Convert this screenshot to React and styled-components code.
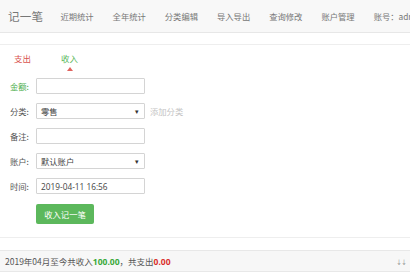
import React from 'react'
import styled, { createGlobalStyle } from 'styled-components'

const GlobalStyle = createGlobalStyle`
    body {
        margin: 0;
        background: #fff;
        font-family: "Noto Sans CJK SC", "Open Sans", sans-serif;
        color: #555;
    }
`

const navItems = ['近期统计', '全年统计', '分类编辑', '导入导出', '查询修改', '账户管理']

export default function App() {
    return (
        <Page>
            <GlobalStyle />
            <Navbar>
                <Brand>记一笔</Brand>
                <NavList>
                    {navItems.map((item) => (
                        <NavItem key={item}>{item}</NavItem>
                    ))}
                    <NavItem>账号：admin</NavItem>
                </NavList>
            </Navbar>

            <Tabs>
                <Tab color="#d9534f">支出</Tab>
                <Tab color="#5cb85c" active>收入</Tab>
            </Tabs>

            <Form>
                <Row>
                    <Label highlight>金额:</Label>
                    <Input />
                </Row>
                <Row>
                    <Label>分类:</Label>
                    <Select>
                        <span>零售</span>
                        <Caret>▾</Caret>
                    </Select>
                    <AddLink>添加分类</AddLink>
                </Row>
                <Row>
                    <Label>备注:</Label>
                    <Input />
                </Row>
                <Row>
                    <Label>账户:</Label>
                    <Select>
                        <span>默认账户</span>
                        <Caret>▾</Caret>
                    </Select>
                </Row>
                <Row>
                    <Label>时间:</Label>
                    <Input value="2019-04-11 16:56" />
                </Row>
                <ButtonRow>
                    <SubmitButton>收入记一笔</SubmitButton>
                </ButtonRow>
            </Form>

            <Divider />

            <Summary>
                <span>
                    2019年04月至今共收入<Amount color="#3aa93a">100.00</Amount>，共支出<Amount color="#d9302c">0.00</Amount>
                </span>
                <More>↓↓</More>
            </Summary>
        </Page>
    )
}

//####################### Style #################

const Page = styled.div`
    width: 410px;
    height: 275px;
    overflow: hidden;
`

const Navbar = styled.div`
    height: 33px;
    display: flex;
    align-items: center;
    padding-left: 8px;
    background: #f8f8f8;
    border-bottom: 1px solid #e7e7e7;
    box-sizing: border-box;
    overflow: hidden;
`

const Brand = styled.div`
    flex-shrink: 0;
    white-space: nowrap;
    font-size: 11.5px;
    color: #777;
    letter-spacing: 0.3px;
    margin-right: 17px;
`

const NavList = styled.div`
    flex-shrink: 0;
    display: flex;
    gap: 19px;
    white-space: nowrap;
`

const NavItem = styled.div`
    font-size: 8.3px;
    color: #777;
`

const Tabs = styled.div`
    margin-top: 11px;
    height: 25px;
    border-top: 1px solid #eee;
    display: flex;
    align-items: center;
    padding-left: 14px;
    gap: 30px;
`

const Tab = styled.div`
    position: relative;
    font-size: 8.5px;
    color: ${({ color }) => color};

    &::after {
        content: '';
        display: ${({ active }) => (active ? 'block' : 'none')};
        position: absolute;
        left: 50%;
        bottom: -7px;
        margin-left: -3px;
        border-left: 3px solid transparent;
        border-right: 3px solid transparent;
        border-bottom: 4px solid #e0645f;
    }
`

const Form = styled.div`
    padding: 8px 0 0 10px;
    display: flex;
    flex-direction: column;
    gap: 9px;
`

const Row = styled.div`
    display: flex;
    align-items: center;
    height: 16px;
`

const Label = styled.div`
    width: 26px;
    font-size: 8.3px;
    color: ${({ highlight }) => (highlight ? '#4cae4c' : '#555')};
`

const Input = styled.input.attrs({ readOnly: true })`
    width: 109px;
    height: 16px;
    box-sizing: border-box;
    border: 1px solid #d4d4d4;
    border-radius: 1px;
    padding: 0 4px;
    font-family: "Open Sans", "Noto Sans CJK SC", sans-serif;
    font-size: 8.3px;
    color: #444;
    outline: none;
`

const Select = styled.div`
    width: 109px;
    height: 16px;
    box-sizing: border-box;
    border: 1px solid #d4d4d4;
    border-radius: 1px;
    padding: 0 5px 0 4px;
    display: flex;
    align-items: center;
    justify-content: space-between;
    font-size: 8.3px;
    color: #444;
`

const Caret = styled.span`
    font-size: 7px;
    color: #333;
`

const AddLink = styled.span`
    margin-left: 5px;
    font-size: 8.3px;
    color: #c4c4c4;
`

const ButtonRow = styled.div`
    display: flex;
    padding-left: 26px;
    margin-top: 1px;
`

const SubmitButton = styled.button`
    width: 58px;
    height: 20px;
    border: none;
    border-radius: 2px;
    background: #5cb85c;
    color: #fff;
    font-family: "Noto Sans CJK SC", sans-serif;
    font-size: 8.3px;
    padding: 0;
`

const Divider = styled.div`
    margin-top: 13px;
    border-top: 1px solid #eee;
`

const Summary = styled.div`
    margin-top: 12px;
    height: 22px;
    box-sizing: border-box;
    background: #f7f7f7;
    border-top: 1px solid #e8e8e8;
    border-bottom: 1px solid #e8e8e8;
    display: flex;
    align-items: center;
    justify-content: space-between;
    padding: 0 4px 0 5px;
    font-size: 8.5px;
    color: #555;
    white-space: nowrap;
`

const Amount = styled.b`
    color: ${({ color }) => color};
    font-family: "Open Sans", sans-serif;
    font-weight: 700;
`

const More = styled.span`
    font-size: 6px;
    color: #888;
    letter-spacing: -1px;
`
